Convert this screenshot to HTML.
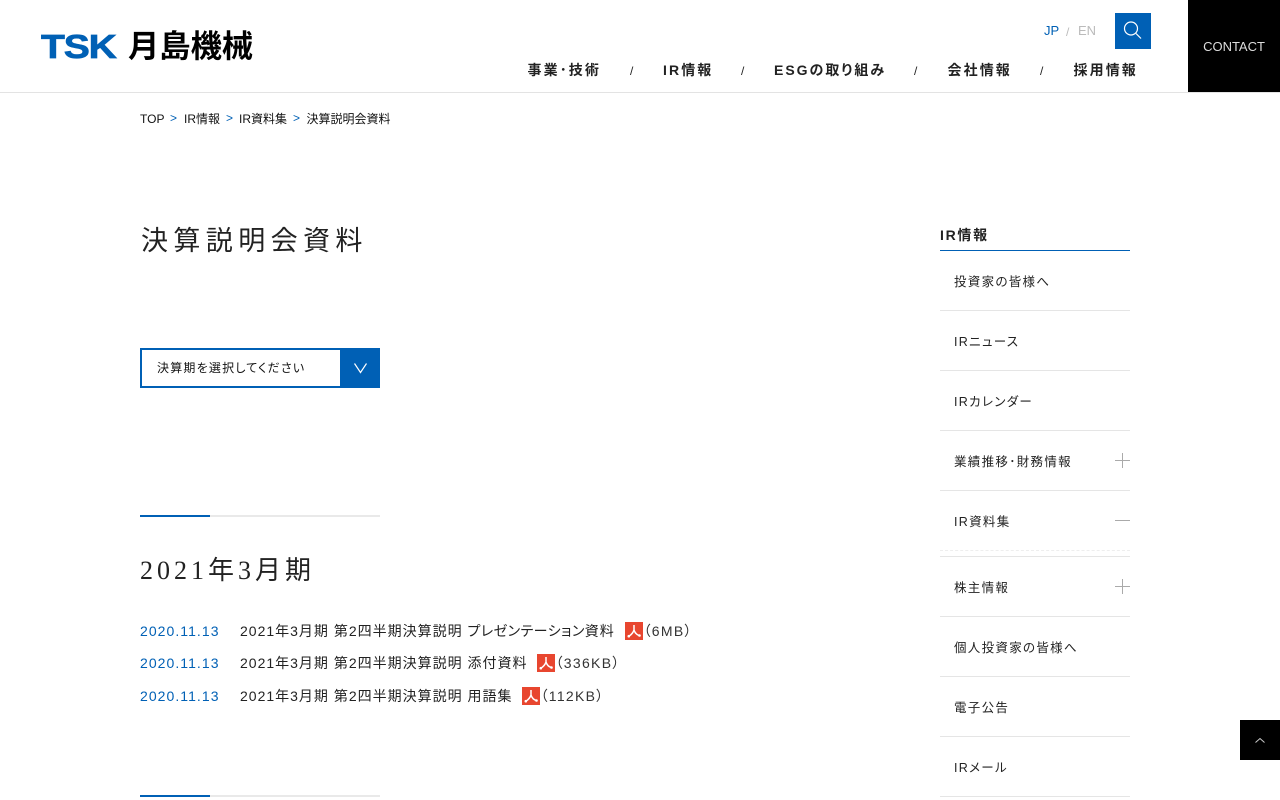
<!DOCTYPE html>
<html lang="ja"><head><meta charset="utf-8"><title>決算説明会資料</title>
<style>
html,body{margin:0;padding:0;background:#fff}
body{width:1280px;height:800px;overflow:hidden;position:relative;font-family:"Liberation Sans","Noto Sans CJK JP",sans-serif;font-feature-settings:"palt";color:#111}
.a{position:absolute;white-space:nowrap}
.nav{top:60px;font-size:14px;line-height:20px;font-weight:bold;letter-spacing:2.1px;color:#222}
.sl{top:63px;font-size:12px;line-height:16px;color:#222}
.bc{top:111px;font-size:12px;line-height:16px;color:#111}
.gt{top:110px;font-size:12px;line-height:16px;color:#0060b5}
.d{left:140px;font-size:14px;line-height:20px;letter-spacing:1.05px;color:#0060b5}
.t{left:240px;font-size:14px;line-height:20px;letter-spacing:1px;color:#222}
.t span{letter-spacing:.45px}
.sz{font-size:14px;line-height:20px;letter-spacing:1.3px;color:#333}
.pdf{position:absolute;width:18px;height:18px}
.m{left:954px;font-size:12.500px;line-height:20px;letter-spacing:1.3px;color:#222}
.r{position:absolute;left:940px;width:190px;height:1px;background:#e5e5e5}
</style></head><body>
<div class="a" style="left:0;top:92px;width:1280px;height:1px;background:#e3e3e3"></div>
<div class="a" style="left:41px;top:27px;font:bold 33px/40px 'Liberation Sans',sans-serif;letter-spacing:-1px;color:#0060b5;-webkit-text-stroke:.7px #0060b5;transform:scaleX(1.185);transform-origin:0 0">TSK</div>
<div class="a" style="left:128px;top:25px;font-size:31.300px;line-height:40px;font-weight:bold;font-family:'Noto Sans CJK JP',sans-serif;font-feature-settings:normal;color:#000">月島機械</div>
<div class="a" style="left:1044px;top:23px;font-size:13px;line-height:16px;color:#0060b5">JP</div>
<div class="a" style="left:1066px;top:24px;font-size:12px;line-height:16px;color:#bbb">/</div>
<div class="a" style="left:1078px;top:23px;font-size:13px;line-height:16px;color:#bbb">EN</div>
<div class="a" style="left:1115px;top:13px;width:36px;height:36px;background:#0060b5"><svg width="36" height="36" fill="none" stroke="#fff" stroke-width="1.2"><circle cx="16" cy="15.500" r="6.500"/><path d="M21 20.500l5 5"/></svg></div>
<div class="a" style="left:1188px;top:0;width:92px;height:92px;background:#000;color:#ddd;font-size:13px;line-height:94px;text-align:center">CONTACT</div>
<div class="a nav" style="left:527.500px">事業･技術</div><div class="a sl" style="left:630px">/</div>
<div class="a nav" style="left:663px">IR情報</div><div class="a sl" style="left:741px">/</div>
<div class="a nav" style="left:774px;letter-spacing:2px">ESGの取り組み</div><div class="a sl" style="left:914px">/</div>
<div class="a nav" style="left:947.500px">会社情報</div><div class="a sl" style="left:1040px">/</div>
<div class="a nav" style="left:1073.500px">採用情報</div>
<div class="a bc" style="left:140px">TOP</div><div class="a gt" style="left:170px">&gt;</div>
<div class="a bc" style="left:184px">IR情報</div><div class="a gt" style="left:226px">&gt;</div>
<div class="a bc" style="left:239px">IR資料集</div><div class="a gt" style="left:293px">&gt;</div>
<div class="a bc" style="left:306.500px">決算説明会資料</div>
<div class="a" style="left:141px;top:223px;font-size:27px;line-height:36px;letter-spacing:5.400px;color:#222">決算説明会資料</div>
<div class="a" style="left:140px;top:348px;width:236px;height:36px;border:2px solid #0060b5;background:#fff"></div>
<div class="a" style="left:157px;top:359px;font-size:12px;line-height:18px;letter-spacing:1.200px;color:#111">決算期を選択してください</div>
<div class="a" style="left:340px;top:348px;width:40px;height:40px;background:#0060b5"><svg width="40" height="40" fill="none" stroke="#fff" stroke-width="1.200"><path d="M14.500 15.500l6 9 6-9"/></svg></div>
<div class="a" style="left:140px;top:515px;width:240px;height:2px;background:#e9e9e9"></div>
<div class="a" style="left:140px;top:515px;width:70px;height:2px;background:#0060b5"></div>
<div class="a" style="left:140px;top:553px;font-family:'Liberation Serif','Noto Sans CJK JP',serif;font-size:26px;line-height:36px;letter-spacing:4px;color:#222">2021年3月期</div>
<div class="a d" style="top:621px">2020.11.13</div>
<div class="a t" style="top:621px">2021年3月期 第2四半期決算説明 <span>プレゼンテーション</span>資料</div>
<svg class="pdf" style="left:625px;top:622px" viewBox="0 0 18 18"><rect width="18" height="18" fill="#e8462f"/><path d="M9 3V8C8 11 6 13 3.500 14.500M9 8C10 11 12 13 14.500 13.500" fill="none" stroke="#fff" stroke-width="1.500"/><circle cx="3.800" cy="14.200" r="1.300" fill="#fff"/><circle cx="14.500" cy="13.500" r="1.300" fill="#fff"/></svg>
<div class="a sz" style="left:643.500px;top:621px">（6MB）</div>
<div class="a d" style="top:653px">2020.11.13</div>
<div class="a t" style="top:653px">2021年3月期 第2四半期決算説明 添付資料</div>
<svg class="pdf" style="left:537px;top:654px" viewBox="0 0 18 18"><rect width="18" height="18" fill="#e8462f"/><path d="M9 3V8C8 11 6 13 3.500 14.500M9 8C10 11 12 13 14.500 13.500" fill="none" stroke="#fff" stroke-width="1.500"/><circle cx="3.800" cy="14.200" r="1.300" fill="#fff"/><circle cx="14.500" cy="13.500" r="1.300" fill="#fff"/></svg>
<div class="a sz" style="left:555.500px;top:653px">（336KB）</div>
<div class="a d" style="top:686px">2020.11.13</div>
<div class="a t" style="top:686px">2021年3月期 第2四半期決算説明 用語集</div>
<svg class="pdf" style="left:522px;top:687px" viewBox="0 0 18 18"><rect width="18" height="18" fill="#e8462f"/><path d="M9 3V8C8 11 6 13 3.500 14.500M9 8C10 11 12 13 14.500 13.500" fill="none" stroke="#fff" stroke-width="1.500"/><circle cx="3.800" cy="14.200" r="1.300" fill="#fff"/><circle cx="14.500" cy="13.500" r="1.300" fill="#fff"/></svg>
<div class="a sz" style="left:540.500px;top:686px">（112KB）</div>
<div class="a" style="left:140px;top:795px;width:240px;height:2px;background:#e9e9e9"></div>
<div class="a" style="left:140px;top:795px;width:70px;height:2px;background:#0060b5"></div>
<div class="a" style="left:940px;top:225px;font-size:14px;line-height:20px;font-weight:bold;letter-spacing:1.700px;color:#222">IR情報</div>
<div class="r" style="top:250px;background:#0060b5"></div>
<div class="a m" style="top:272px">投資家の皆様へ</div><div class="r" style="top:310px"></div>
<div class="a m" style="top:332px">IRニュース</div><div class="r" style="top:370px"></div>
<div class="a m" style="top:392px">IRカレンダー</div><div class="r" style="top:430px"></div>
<div class="a m" style="top:452px">業績推移･財務情報</div><div class="r" style="top:490px"></div>
<div class="a m" style="top:512px">IR資料集</div>
<div class="a" style="left:940px;top:550px;width:190px;border-top:1px dashed #eee"></div>
<div class="r" style="top:556px"></div>
<div class="a m" style="top:578px">株主情報</div><div class="r" style="top:616px"></div>
<div class="a m" style="top:638px">個人投資家の皆様へ</div><div class="r" style="top:676px"></div>
<div class="a m" style="top:698px">電子公告</div><div class="r" style="top:736px"></div>
<div class="a m" style="top:758px">IRメール</div><div class="r" style="top:796px"></div>
<div class="a" style="left:1115px;top:460px;width:15px;height:1px;background:#aaa"></div><div class="a" style="left:1122px;top:453px;width:1px;height:15px;background:#aaa"></div>
<div class="a" style="left:1115px;top:520px;width:15px;height:1px;background:#aaa"></div>
<div class="a" style="left:1115px;top:586px;width:15px;height:1px;background:#aaa"></div><div class="a" style="left:1122px;top:579px;width:1px;height:15px;background:#aaa"></div>
<div class="a" style="left:1240px;top:720px;width:40px;height:40px;background:#000"><svg width="40" height="40" fill="none" stroke="#ccc"><path d="M15.500 22.500l4.500-4 4.500 4"/></svg></div>
</body></html>
